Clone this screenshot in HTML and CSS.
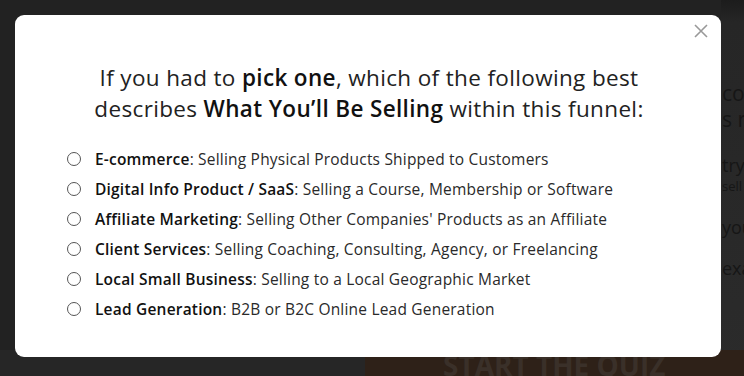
FILE: index.html
```
<!DOCTYPE html>
<html lang="en">
<head>
    <meta charset="UTF-8">
    <title>Funnel Quiz</title>
    <link rel="stylesheet" href="styles.css">
</head>
<body>
    <div class="page">
        <div class="side"></div>
        <div class="main">
            <p class="big">could</p>
            <p class="big">s re</p>
            <p class="mid">try,</p>
            <p class="small">sell</p>
            <p class="mid">you</p>
            <p class="mid">example</p>
        </div>
        <div class="footer">
            <div class="foot-left"></div>
            <div class="quiz-btn">START THE QUIZ</div>
        </div>
    </div>

    <div class="overlay">
        <div class="modal">
            <svg class="close" width="14" height="14" viewBox="0 0 14 14"><path d="M1 1L13 13M13 1L1 13" stroke="#999" stroke-width="1.6"/></svg>
            <h2 class="question">If you had to <b>pick one</b>, which of the following best<br>describes <b>What You’ll Be Selling</b> within this funnel:</h2>
            <ul class="options">
                <li><i class="radio"></i><span><b>E-commerce</b>: Selling Physical Products Shipped to Customers</span></li>
                <li><i class="radio"></i><span><b>Digital Info Product / SaaS</b>: Selling a Course, Membership or Software</span></li>
                <li><i class="radio"></i><span><b>Affiliate Marketing</b>: Selling Other Companies' Products as an Affiliate</span></li>
                <li><i class="radio"></i><span><b>Client Services</b>: Selling Coaching, Consulting, Agency, or Freelancing</span></li>
                <li><i class="radio"></i><span><b>Local Small Business</b>: Selling to a Local Geographic Market</span></li>
                <li><i class="radio"></i><span><b>Lead Generation</b>: B2B or B2C Online Lead Generation</span></li>
            </ul>
        </div>
    </div>
</body>
</html>
```

FILE: styles.css
```
*{
    margin: 0;
    padding: 0;
    box-sizing: border-box;
}
html, body{
    height: 100%;
}
body{
    background: #252525;
    font-family: "Open Sans", "Liberation Sans", sans-serif;
    overflow: hidden;
}
.page{
    display: grid;
    grid-template-columns: 721px 1fr;
    grid-template-rows: 350px 26px;
    height: 100%;
    background: linear-gradient(#1c1c1c, #262626 6%, #2b2b2b);
}
.side{
    background: #222;
}
.main{
    padding: 80px 0 0 1px;
    color: #161616;
    white-space: nowrap;
    overflow: hidden;
}
.main .big{
    font-size: 21px;
    line-height: 26px;
}
.main .mid{
    font-size: 18px;
    line-height: 22px;
    margin-top: 22px;
}
.main .mid:last-child{
    margin-top: 19px;
}
.main .small{
    font-size: 13px;
    line-height: 16px;
    margin-top: 2px;
}
.footer{
    grid-column: 1 / 3;
    display: flex;
}
.foot-left{
    width: 365px;
    background: #262626;
}
.quiz-btn{
    flex: 1;
    background: #2e2118;
    color: #3a3029;
    font-size: 28px;
    font-weight: 700;
    line-height: 30px;
    padding: 0 0 0 78px;
    white-space: nowrap;
    overflow: hidden;
}

.overlay{
    position: fixed;
    top: 0;
    left: 0;
    right: 0;
    bottom: 0;
    padding: 15px 23px 19px 15px;
}
.modal{
    position: relative;
    height: 100%;
    background: #fff;
    border-radius: 9px;
    padding: 47px 0 0 52px;
    color: #222;
}
.close{
    position: absolute;
    top: 9px;
    right: 13px;
}
.question{
    width: 600px;
    margin-left: 2px;
    text-align: center;
    font-size: 22.5px;
    line-height: 31px;
    font-weight: 400;
    color: #222;
    letter-spacing: 0.35px;
}
.question b{
    font-weight: 600;
    color: #111;
}
.options{
    list-style: none;
    margin-top: 20px;
}
.options li{
    display: flex;
    align-items: center;
    height: 30px;
    font-size: 15.5px;
    letter-spacing: 0.2px;
    color: #2a2a2a;
}
.options b{
    font-weight: 600;
    color: #111;
}
.radio{
    width: 14px;
    height: 14px;
    border: 1.5px solid #555;
    border-radius: 50%;
    margin-right: 14px;
}
```
